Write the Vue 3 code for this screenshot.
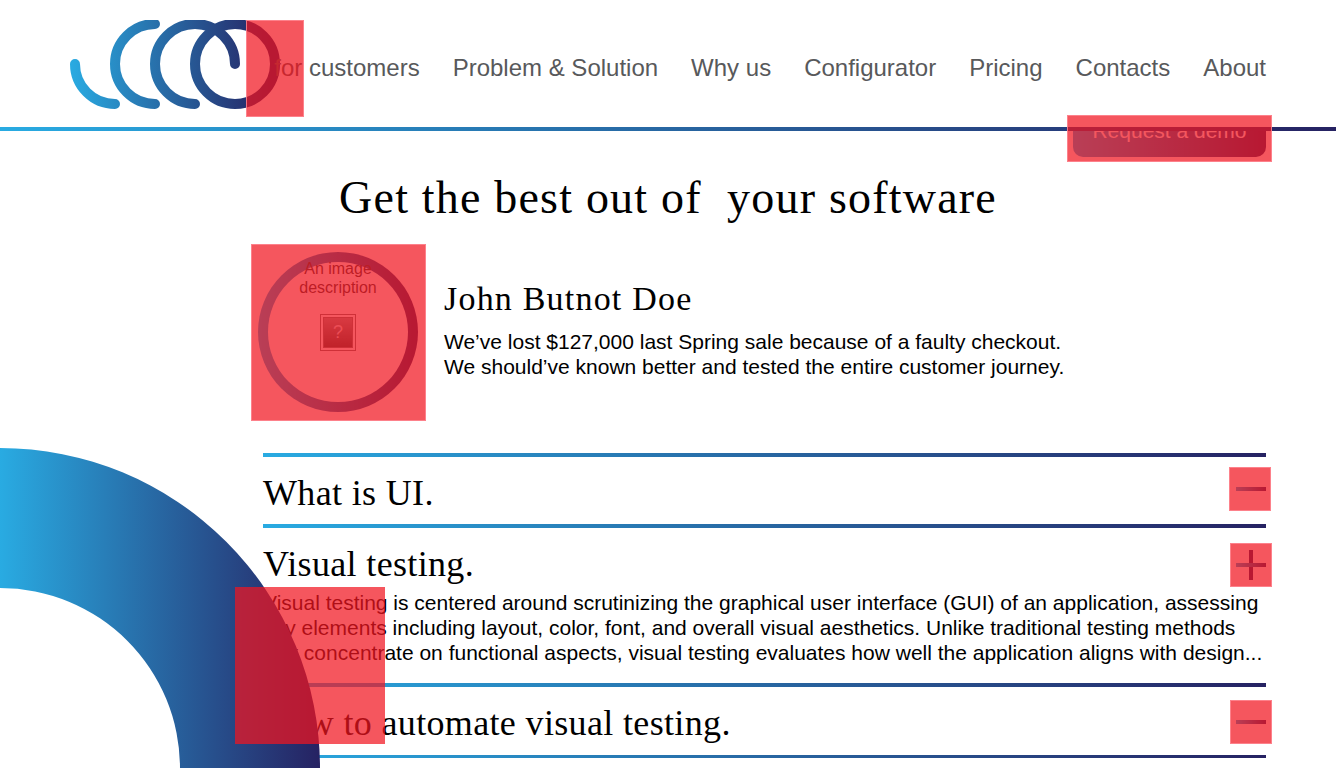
<script setup>
const nav = ['for customers', 'Problem & Solution', 'Why us', 'Configurator', 'Pricing', 'Contacts', 'About']
</script>

<template>
  <div class="page">
    <header class="header">
      <svg class="logo" width="210" height="90" viewBox="70 20 210 90" fill="none">
        <defs>
          <linearGradient id="lg" gradientUnits="userSpaceOnUse" x1="70" y1="0" x2="270" y2="0">
            <stop offset="0" stop-color="#29abe2" />
            <stop offset="1" stop-color="#262262" />
          </linearGradient>
        </defs>
        <g stroke="url(#lg)" stroke-width="10" stroke-linecap="round">
          <path d="M75 64A40 40 0 0 0 115 104" />
          <path d="M155 24A40 40 0 0 0 155 104" />
          <path d="M195 104A40 40 0 1 1 235 64" />
          <circle cx="235" cy="64" r="40" />
        </g>
      </svg>
      <nav class="nav">
        <a v-for="item in nav" :key="item" class="nav-link">{{ item }}</a>
      </nav>
    </header>
    <div class="rule"></div>
    <div class="cta-row">
      <button class="cta">Request a demo</button>
    </div>

    <main class="main">
      <h1 class="title">Get the best out of&nbsp; your software</h1>
      <section class="profile">
        <div class="avatar">
          <span class="alt">An image description</span>
          <span class="broken">?</span>
        </div>
        <div class="quote">
          <h2 class="name">John Butnot Doe</h2>
          <p class="quote-text">We’ve lost $127,000 last Spring sale because of a faulty checkout.<br />We should’ve known better and tested the entire customer journey.</p>
        </div>
      </section>

      <section class="faq">
        <article class="faq-item closed">
          <h3 class="faq-title">What is UI.</h3>
          <span class="toggle minus t-first"></span>
        </article>
        <article class="faq-item open">
          <h3 class="faq-title">Visual testing.</h3>
          <span class="toggle plus"></span>
          <p class="faq-text">Visual testing is centered around scrutinizing the graphical user interface (GUI) of an application, assessing<br />key elements including layout, color, font, and overall visual aesthetics. Unlike traditional testing methods<br />that concentrate on functional aspects, visual testing evaluates how well the application aligns with design...</p>
        </article>
        <article class="faq-item closed last">
          <h3 class="faq-title">How to automate visual testing.</h3>
          <span class="toggle minus t-last"></span>
        </article>
      </section>
    </main>

    <svg class="arc" width="320" height="320" viewBox="0 0 320 320">
      <defs>
        <linearGradient id="ag" x1="0" y1="0" x2="1" y2="0">
          <stop offset="0" stop-color="#29abe2" />
          <stop offset="1" stop-color="#262262" />
        </linearGradient>
      </defs>
      <path d="M0 0A320 320 0 0 1 320 320H180A180 180 0 0 0 0 140Z" fill="url(#ag)" />
    </svg>

    <div class="flag f-logo"></div>
    <div class="flag f-cta"></div>
    <div class="flag f-avatar"></div>
    <div class="flag f-t1"></div>
    <div class="flag f-t2"></div>
    <div class="flag f-t3"></div>
    <div class="flag f-text"></div>
  </div>
</template>

<style>
html, body { margin: 0; background: #fff; overflow: hidden; }
</style>

<style scoped>
.page {
  position: relative;
  width: 1336px;
  height: 768px;
  overflow: hidden;
  background: #fff;
  font-family: "Liberation Sans", Arial, sans-serif;
  color: #000;
}
.header {
  position: relative;
  z-index: 2;
  display: flex;
  justify-content: space-between;
  height: 127px;
  padding: 0 70px;
  background: #fff;
}
.logo { margin-top: 20px; flex: none; }
.nav {
  display: flex;
  gap: 33px;
  padding-top: 54px;
  margin-left: -6px;
}
.nav-link {
  font-size: 24px;
  line-height: 28px;
  color: #58595b;
  white-space: nowrap;
}
.rule {
  position: relative;
  z-index: 2;
  height: 4px;
  background: linear-gradient(90deg, #29abe2, #262262);
}
.cta-row {
  display: flex;
  justify-content: flex-end;
  padding-right: 70px;
  margin-top: -26px;
}
.cta {
  width: 193px;
  height: 52px;
  border: 0;
  border-radius: 10px;
  background: linear-gradient(90deg, #29abe2, #262262);
  color: #fff;
  font: 21px/52px "Liberation Sans", Arial, sans-serif;
  padding: 0;
}
.main { padding: 0 70px 0 263px; }
.title {
  margin: 14px 0 0 -263px;
  padding-left: 70px;
  text-align: center;
  font: 400 46px/54px "Liberation Serif", "Times New Roman", serif;
  letter-spacing: 1.2px;
}
.profile {
  display: flex;
  margin-top: 27px;
  height: 201px;
}
.avatar {
  position: relative;
  box-sizing: border-box;
  flex: none;
  width: 160px;
  height: 160px;
  margin-left: -5px;
  border: 10px solid transparent;
  border-radius: 50%;
  background: linear-gradient(#fff, #fff) padding-box, linear-gradient(90deg, #29abe2, #262262) border-box;
  color: #333;
  font-size: 16px;
  line-height: 19px;
  text-align: center;
}
.alt { display: block; width: 90px; margin: -3px auto 0; }
.broken {
  display: block;
  box-sizing: border-box;
  width: 36px;
  height: 37px;
  margin: 17px auto 0;
  border: 4px double #777;
  background: linear-gradient(#999, #444) content-box;
  color: #ddd;
  font-size: 18px;
  line-height: 29px;
}
.quote { margin-left: 26px; padding-top: 27px; }
.name {
  margin: 0;
  font: 400 34px/40px "Liberation Serif", "Times New Roman", serif;
  letter-spacing: 1.2px;
}
.quote-text {
  margin: 10px 0 0;
  font-size: 21px;
  line-height: 25px;
  white-space: nowrap;
}
.faq { width: 1003px; }
.faq-item {
  position: relative;
  border-top: 4px solid;
  border-image: linear-gradient(90deg, #29abe2, #262262) 1;
}
.closed { height: 67px; }
.open { height: 155px; }
.last { height: 68px; border-bottom: 3px solid; }
.faq-title {
  margin: 0;
  padding-top: 14px;
  font: 400 36px/44px "Liberation Serif", "Times New Roman", serif;
  letter-spacing: 0.35px;
}
.faq-text {
  margin: 4px 0 0;
  font-size: 21px;
  line-height: 25px;
  white-space: nowrap;
}
.toggle {
  position: absolute;
  top: 22px;
  right: 0;
  width: 30px;
  height: 30px;
  background: linear-gradient(90deg, #29abe2, #262262) 0 13px / 30px 4px no-repeat;
}
.t-first { top: 17px; }
.t-last { top: 20px; }
.plus {
  background:
    linear-gradient(90deg, #29abe2, #262262) 0 13px / 30px 4px no-repeat,
    linear-gradient(#262262, #262262) 13px 0 / 4px 30px no-repeat;
}
.arc {
  position: absolute;
  left: 0;
  bottom: 0;
  z-index: 3;
  display: block;
}
.flag {
  position: absolute;
  z-index: 4;
  box-sizing: border-box;
  background: rgba(241, 21, 32, 0.72);
  border: 1px solid rgba(255, 140, 150, 0.8);
}
.f-logo { left: 246px; top: 20px; width: 58px; height: 97px; }
.f-cta { left: 1067px; top: 115px; width: 205px; height: 47px; }
.f-avatar { left: 251px; top: 244px; width: 175px; height: 177px; }
.f-t1 { left: 1229px; top: 467px; width: 42px; height: 44px; }
.f-t2 { left: 1230px; top: 543px; width: 42px; height: 44px; }
.f-t3 { left: 1230px; top: 700px; width: 42px; height: 44px; }
.f-text { left: 235px; top: 587px; width: 150px; height: 157px; border: 0; }
</style>
